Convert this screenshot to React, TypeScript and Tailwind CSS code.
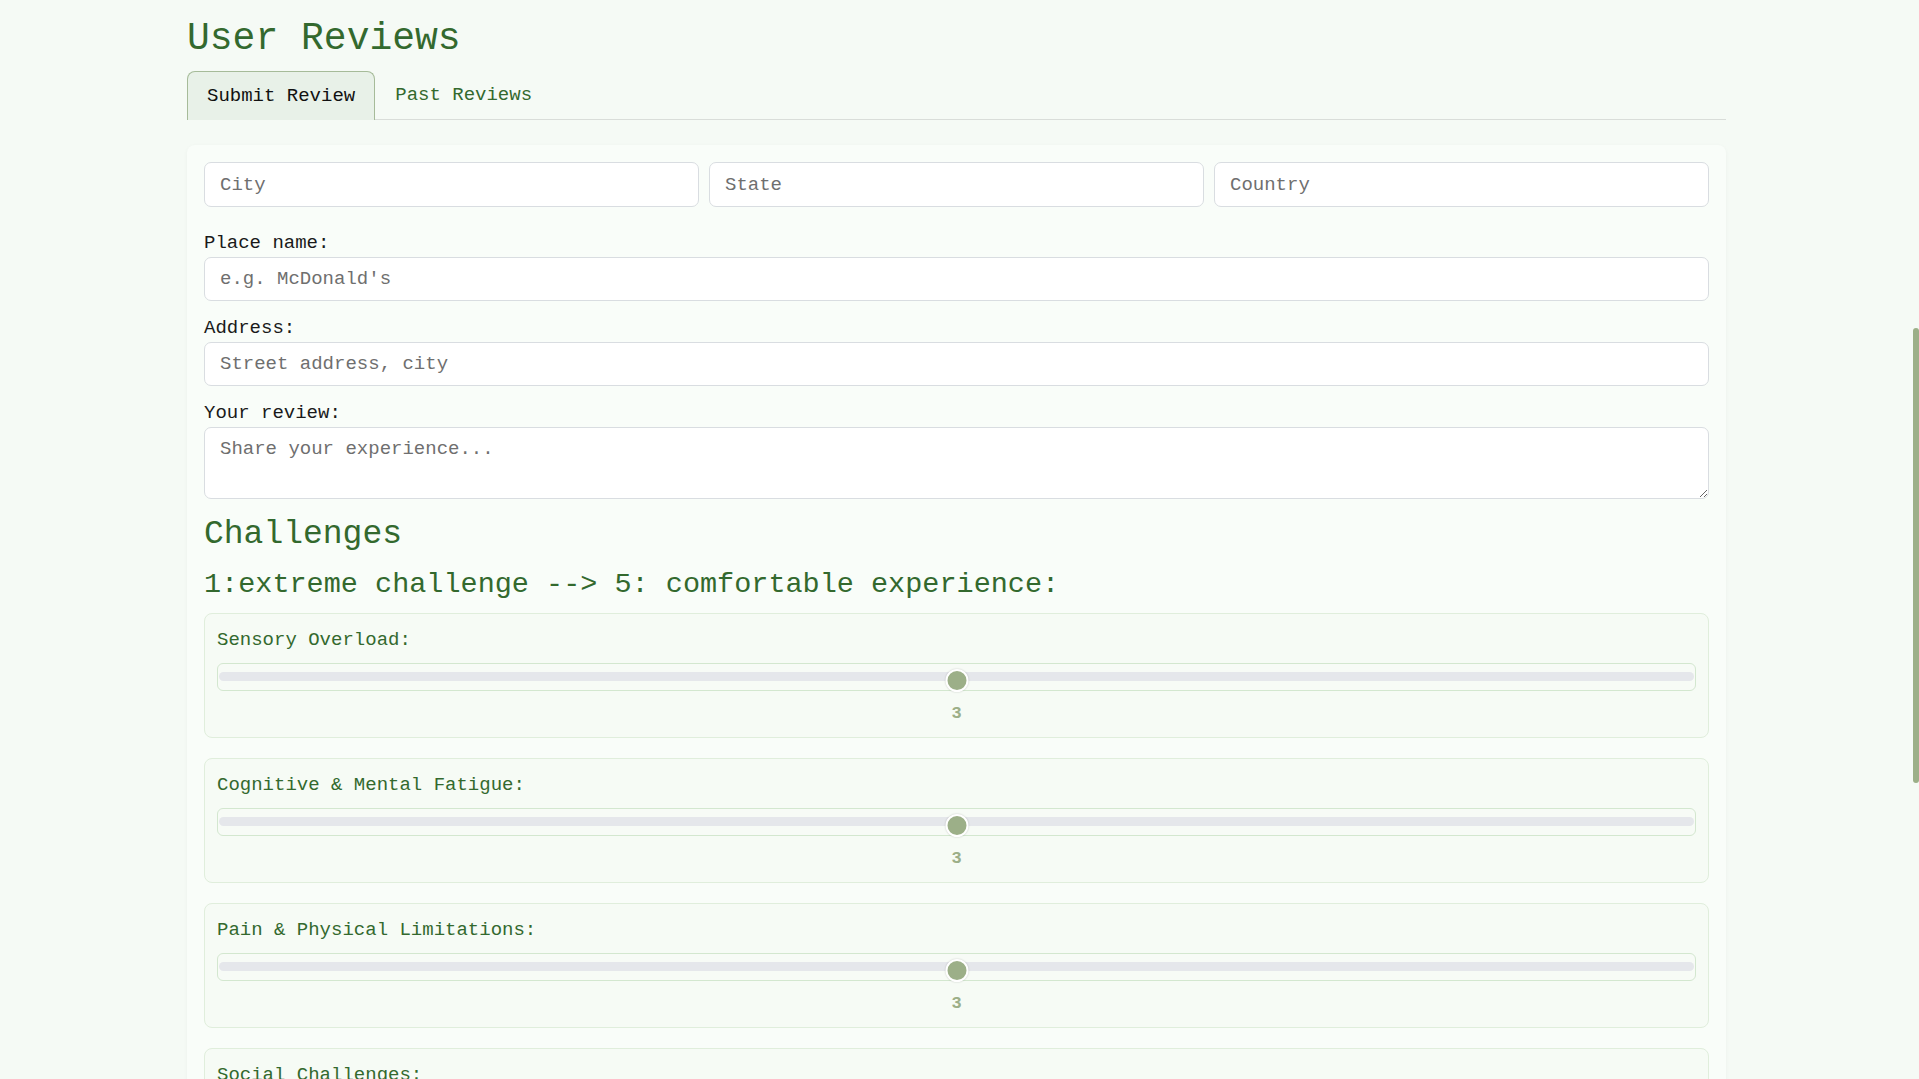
import React, { useState } from "react";

const CHALLENGES = [
  "Sensory Overload:",
  "Cognitive & Mental Fatigue:",
  "Pain & Physical Limitations:",
  "Social Challenges:",
  "Communication Barriers:",
  "Navigation & Wayfinding:",
  "Accessibility of Facilities:",
  "Waiting & Queues:",
];

function ChallengeSlider({ label }: { label: string }) {
  const value = 3;
  const pct = ((value - 1) / 4) * 100;
  return (
    <div className="rounded-lg border border-[#e0eedc] bg-[#f6fbf5] px-[12px] pt-[15px] pb-[13.5px]">
      <div className="text-[19px] leading-[22px] text-[#33692e]">{label}</div>
      <div className="mt-[12px] h-[28px] rounded-md border border-[#d3e7cf] bg-[#f7fbf6] px-[1px]">
        <div className="relative h-full">
          <div className="absolute left-0 right-0 top-[8.5px] h-[9px] rounded-full bg-[#e5e7eb]" />
          <div
            className="absolute top-[5px] h-[23px] w-[23px] -translate-x-1/2 rounded-full border-2 border-white bg-[#9caf88] shadow-[0_0_2px_rgba(0,0,0,0.2)]"
            style={{ left: `${pct}%` }}
          />
        </div>
      </div>
      <div className="mt-[13.5px] text-center text-[17px] font-bold leading-[19px] text-[#9caf88]">
        {value}
      </div>
    </div>
  );
}

export default function App() {
  const [tab, setTab] = useState("submit");
  const inputCls =
    "h-[44px] w-full rounded-[7px] border border-[#d9dde1] bg-white px-[15px] text-[19px] text-[#222] outline-none placeholder:text-[#6f6f6f]";
  const activeTab =
    "-mb-px h-[49px] rounded-t-lg border border-b-0 border-[#a6bb99] bg-[#e8f1e8] px-[19px] text-[19px] text-[#111]";
  const idleTab =
    "-mb-px h-[49px] border border-transparent px-[19px] text-[19px] text-[#33692e]";

  return (
    <div className="relative h-screen overflow-y-auto bg-[#f5faf5] pr-[6px] font-['Liberation_Mono','Courier_New',monospace]">
      {/* scroll indicator */}
      <div className="fixed right-0 top-[328px] h-[455px] w-[6px] rounded-full bg-[#9caf88]" />

      <div className="mx-auto max-w-[1539px] pb-[40px]">
        <h1 className="mt-[16.5px] text-[38px] font-normal leading-[44px] text-[#33692e]">
          User Reviews
        </h1>

        <div className="mt-[10.5px] flex border-b border-[#d9ddd9]">
          <button onClick={() => setTab("submit")} className={tab === "submit" ? activeTab : idleTab}>
            Submit Review
          </button>
          <button onClick={() => setTab("past")} className={tab === "past" ? activeTab : idleTab}>
            Past Reviews
          </button>
        </div>

        <div className="mt-[25px] rounded-lg bg-[#f9fdf9] p-[17px] shadow-[0_1px_4px_rgba(0,0,0,0.04)]">
          <div className="grid grid-cols-3 gap-[10px]">
            <input className={`${inputCls} h-[45px]`} placeholder="City" />
            <input className={`${inputCls} h-[45px]`} placeholder="State" />
            <input className={`${inputCls} h-[45px]`} placeholder="Country" />
          </div>

          <label className="mt-[24.5px] block text-[19px] leading-[22px] text-[#1a1a1a]">
            Place name:
          </label>
          <input className={`${inputCls} mt-[3.5px]`} placeholder="e.g. McDonald's" />

          <label className="mt-[15.5px] block text-[19px] leading-[22px] text-[#1a1a1a]">
            Address:
          </label>
          <input className={`${inputCls} mt-[3.5px]`} placeholder="Street address, city" />

          <label className="mt-[15.5px] block text-[19px] leading-[22px] text-[#1a1a1a]">
            Your review:
          </label>
          <textarea
            className="mt-[3.5px] block h-[72px] w-full rounded-[7px] border border-[#d9dde1] bg-white px-[15px] pt-[10px] pb-[8px] text-[19px] leading-[22px] text-[#222] outline-none placeholder:text-[#6f6f6f]"
            placeholder="Share your experience..."
          />

          <h2 className="mt-[15.5px] text-[33px] font-normal leading-[39px] text-[#33692e]">
            Challenges
          </h2>
          <h3 className="mt-[14.7px] text-[28.5px] font-normal leading-[34px] text-[#33692e]">
            1:extreme challenge --&gt; 5: comfortable experience:
          </h3>

          <div className="mt-[10.6px] flex flex-col gap-[20px]">
            {CHALLENGES.map((c) => (
              <ChallengeSlider key={c} label={c} />
            ))}
          </div>

          <button className="mt-[24px] h-[48px] w-full rounded-lg bg-[#9caf88] text-[19px] font-bold text-white">
            Submit Review
          </button>
        </div>
      </div>
    </div>
  );
}
